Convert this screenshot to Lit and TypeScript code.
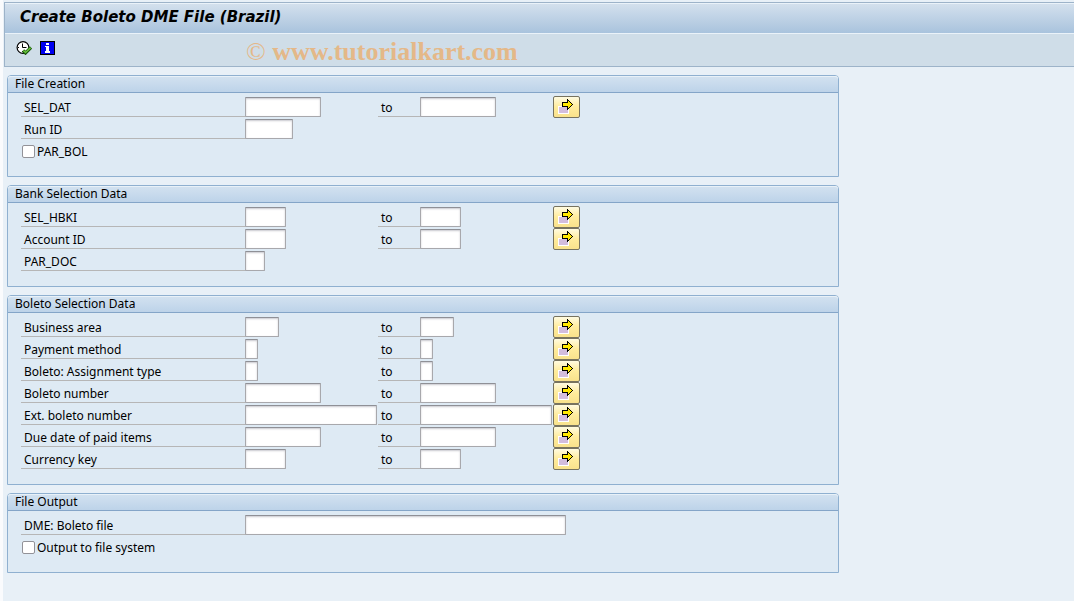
import { LitElement, html, css, svg, nothing } from "lit";
import { customElement } from "lit/decorators.js";
import { classMap } from "lit/directives/class-map.js";

type Size = "date" | "run" | "code" | "pair" | "area" | "flag" | "long" | "path";

interface Field {
  kind: "single" | "range" | "check";
  label: string;
  size?: Size;
}

interface Group {
  title: string;
  fields: Field[];
}

const GROUPS: Group[] = [
  {
    title: "File Creation",
    fields: [
      { kind: "range", label: "SEL_DAT", size: "date" },
      { kind: "single", label: "Run ID", size: "run" },
      { kind: "check", label: "PAR_BOL" },
    ],
  },
  {
    title: "Bank Selection Data",
    fields: [
      { kind: "range", label: "SEL_HBKI", size: "code" },
      { kind: "range", label: "Account ID", size: "code" },
      { kind: "single", label: "PAR_DOC", size: "pair" },
    ],
  },
  {
    title: "Boleto Selection Data",
    fields: [
      { kind: "range", label: "Business area", size: "area" },
      { kind: "range", label: "Payment method", size: "flag" },
      { kind: "range", label: "Boleto: Assignment type", size: "flag" },
      { kind: "range", label: "Boleto number", size: "date" },
      { kind: "range", label: "Ext. boleto number", size: "long" },
      { kind: "range", label: "Due date of paid items", size: "date" },
      { kind: "range", label: "Currency key", size: "code" },
    ],
  },
  {
    title: "File Output",
    fields: [
      { kind: "single", label: "DME: Boleto file", size: "path" },
      { kind: "check", label: "Output to file system" },
    ],
  },
];

const executeIcon = svg`
  <svg width="16" height="14" viewBox="0 0 16 14" aria-hidden="true">
    <circle cx="7" cy="6.5" r="5.9" fill="#fff" stroke="#000" stroke-width="1.2" />
    <path d="M6.5 2.5V6.5H10.5" fill="none" stroke="#000" />
    <path d="M2 6.5h1M6.5 10v1" stroke="#000" />
    <path d="M7 9.5L9.5 12L15 6.5" fill="none" stroke="#1c5a10" stroke-width="3.2" />
    <path d="M7.3 9.5L9.5 11.6L14.6 6.7" fill="none" stroke="#6cc63c" stroke-width="1.4" />
  </svg>`;

const infoIcon = svg`
  <svg width="15" height="14" viewBox="0 0 15 14" shape-rendering="crispEdges" aria-hidden="true">
    <rect width="15" height="14" fill="#000" />
    <rect x="1" y="1" width="13" height="12" fill="#0000f0" />
    <path d="M6 2h3v2H6zM5 5h4v5h1v2H5v-2h1V6H5z" fill="#fff" />
  </svg>`;

const arrowIcon = svg`
  <svg width="17" height="16" viewBox="0 0 17 16" shape-rendering="crispEdges" aria-hidden="true">
    <rect x="0" y="7" width="11" height="8" fill="#fff" />
    <rect x="1" y="8" width="9" height="6" fill="#d3bddd" />
    <path d="M4 3H9V0h1v1h1v1h1v1h1v1h1v1h1v1h-1v1h-1v1h-1v1h-1v1h-1v1H9V8H4z" fill="#000" />
    <path d="M5 4h5V2h1v1h1v1h1v1h1v1h-1v1h-1v1h-1v1h-1V7H5z" fill="#ffe800" />
  </svg>`;

@customElement("app-root")
export class AppRoot extends LitElement {
  static styles = css`
    :host {
      display: block;
      box-sizing: border-box;
      min-height: 100vh;
      padding: 2px 0 28px 1px;
      border-left: 3px solid #fafbfd;
      background: #e8f0f7;
      color: #000;
      font: 12px/16px "Noto Sans", sans-serif;
    }
    .top {
      border: 1px solid #9db3c9;
      border-right: 0;
    }
    .title {
      margin: 0;
      padding: 1px 15px 4px;
      border-top: 1px solid #eaf2f9;
      border-bottom: 1px solid #eaf2f9;
      background: linear-gradient(#d3e0ed, #a9c3dd);
      font: italic bold 15px/24px "DejaVu Sans", sans-serif;
    }
    .tools {
      display: flex;
      align-items: center;
      gap: 8px;
      height: 32px;
      padding-left: 11px;
      background: #cfdde8;
    }
    .tool {
      display: flex;
      padding: 0 0 4px;
      border: 0;
      background: none;
    }
    .brand {
      margin-left: 183px;
      padding-top: 4px;
      color: #e4b888;
      font: bold 26px/32px "Liberation Serif", serif;
    }
    .mark {
      font-weight: normal;
    }
    .groups {
      display: flex;
      flex-direction: column;
      gap: 8px;
      max-width: 832px;
      padding: 8px 3px;
    }
    .group {
      border: 1px solid #8fb0d0;
      border-radius: 4px 4px 0 0;
      background: #deeaf4;
    }
    .heading {
      margin: 0;
      padding: 0 7px;
      border-bottom: 1px solid #84a5c8;
      border-radius: 3px 3px 0 0;
      background: linear-gradient(#d3e2f0, #bdd3e9);
      box-shadow: inset 0 1px #e8f1f8;
      font: 12px/16px "Noto Sans", sans-serif;
    }
    .fields {
      padding: 3px 13px 14px;
    }
    .row {
      display: grid;
      grid-template-columns: 224px 133px 42px 133px 27px;
      align-items: start;
      height: 22px;
    }
    .label {
      padding: 4px 3px 0;
      border-bottom: 1px solid #b6b6b6;
      white-space: nowrap;
    }
    .input {
      box-sizing: border-box;
      height: 20px;
      margin: 1px 0 0;
      padding: 0 3px;
      border: 1px solid #a8a8ac;
      border-top-color: #8f9096;
      border-radius: 1px;
      background: #fff;
      box-shadow: inset 0 1px 2px #c8c8ce;
      font: inherit;
    }
    .date { width: 76px; }
    .run { width: 48px; }
    .code { width: 41px; }
    .pair { width: 20px; }
    .area { width: 34px; }
    .flag { width: 13px; }
    .long { width: 132px; }
    .path { width: 321px; }
    .more {
      display: flex;
      align-items: center;
      justify-content: center;
      box-sizing: border-box;
      width: 27px;
      height: 22px;
      padding: 0;
      border: 1px solid #77735f;
      border-radius: 2px;
      background: linear-gradient(#fffbe0, #ffec9c 50%, #f9e28c);
    }
    .check {
      display: flex;
      align-items: center;
      gap: 2px;
      height: 22px;
      padding-left: 1px;
    }
    .caption {
      padding-top: 2px;
    }
    .box {
      appearance: none;
      width: 13px;
      height: 13px;
      margin: 0;
      border: 1px solid #929298;
      border-radius: 2px;
      background: #fff;
    }
  `;

  private renderField(field: Field, id: string) {
    if (field.kind === "check") {
      return html`
        <div class="check">
          <input class="box" type="checkbox" id=${id} />
          <label class="caption" for=${id}>${field.label}</label>
        </div>`;
    }
    const classes = classMap({ input: true, [field.size!]: true });
    return html`
      <div class="row">
        <label class="label" for=${id}>${field.label}</label>
        <input class=${classes} type="text" id=${id} />
        ${field.kind === "range"
          ? html`
              <label class="label" for="${id}-to">to</label>
              <input class=${classes} type="text" id="${id}-to" />
              <button class="more" type="button" aria-label="Multiple selection">${arrowIcon}</button>`
          : nothing}
      </div>`;
  }

  render() {
    return html`
      <header class="top">
        <h1 class="title">Create Boleto DME File (Brazil)</h1>
        <div class="tools">
          <button class="tool" type="button" aria-label="Execute">${executeIcon}</button>
          <button class="tool" type="button" aria-label="Information">${infoIcon}</button>
          <span class="brand"><span class="mark">©</span> www.tutorialkart.com</span>
        </div>
      </header>
      <main class="groups">
        ${GROUPS.map(
          (group, g) => html`
            <section class="group">
              <h2 class="heading">${group.title}</h2>
              <div class="fields">
                ${group.fields.map((field, f) => this.renderField(field, `field-${g}-${f}`))}
              </div>
            </section>`
        )}
      </main>`;
  }
}
